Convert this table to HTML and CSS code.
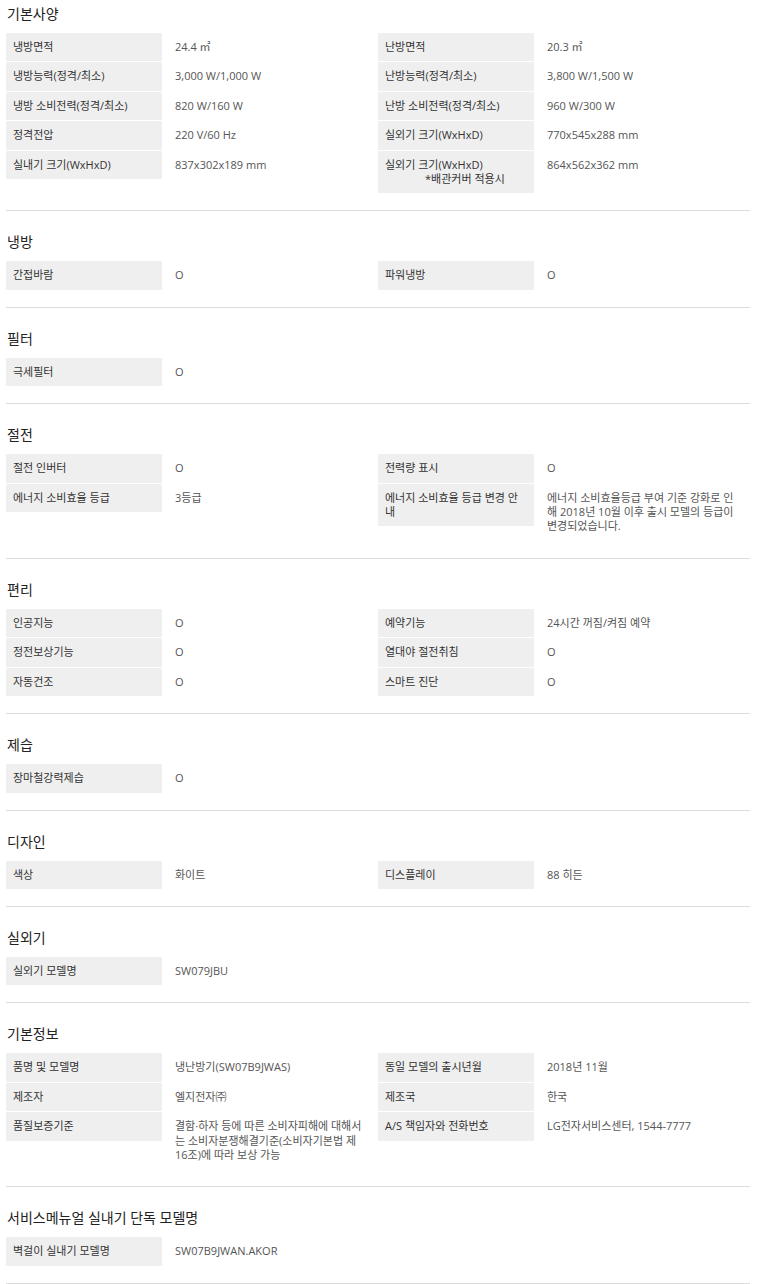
FILE: index.html
```html
<!DOCTYPE html>
<html lang="ko">
<head>
<meta charset="utf-8">
<title>제품 사양</title>
<link rel="stylesheet" href="styles.css">
</head>
<body>
<div class="spec">
  <section class="sec first">
    <h2 class="sec-title">기본사양</h2>
    <div class="grid">
      <div class="item"><div class="lbl">냉방면적</div><div class="val">24.4 ㎡</div></div>
      <div class="item"><div class="lbl">난방면적</div><div class="val">20.3 ㎡</div></div>
      <div class="item"><div class="lbl">냉방능력(정격/최소)</div><div class="val">3,000 W/1,000 W</div></div>
      <div class="item"><div class="lbl">난방능력(정격/최소)</div><div class="val">3,800 W/1,500 W</div></div>
      <div class="item"><div class="lbl">냉방 소비전력(정격/최소)</div><div class="val">820 W/160 W</div></div>
      <div class="item"><div class="lbl">난방 소비전력(정격/최소)</div><div class="val">960 W/300 W</div></div>
      <div class="item"><div class="lbl">정격전압</div><div class="val">220 V/60 Hz</div></div>
      <div class="item"><div class="lbl">실외기 크기(WxHxD)</div><div class="val">770x545x288 mm</div></div>
      <div class="item"><div class="lbl">실내기 크기(WxHxD)</div><div class="val">837x302x189 mm</div></div>
      <div class="item"><div class="lbl">실외기 크기(WxHxD)<br><span class="indent"></span>*배관커버 적용시</div><div class="val">864x562x362 mm</div></div>
    </div>
  </section>

  <section class="sec">
    <h2 class="sec-title">냉방</h2>
    <div class="grid">
      <div class="item"><div class="lbl">간접바람</div><div class="val">O</div></div>
      <div class="item"><div class="lbl">파워냉방</div><div class="val">O</div></div>
    </div>
  </section>

  <section class="sec">
    <h2 class="sec-title">필터</h2>
    <div class="grid">
      <div class="item"><div class="lbl">극세필터</div><div class="val">O</div></div>
    </div>
  </section>

  <section class="sec">
    <h2 class="sec-title">절전</h2>
    <div class="grid">
      <div class="item"><div class="lbl">절전 인버터</div><div class="val">O</div></div>
      <div class="item"><div class="lbl">전력량 표시</div><div class="val">O</div></div>
      <div class="item"><div class="lbl">에너지 소비효율 등급</div><div class="val">3등급</div></div>
      <div class="item"><div class="lbl">에너지 소비효율 등급 변경 안내</div><div class="val">에너지 소비효율등급 부여 기준 강화로 인해 2018년 10월 이후 출시 모델의 등급이 변경되었습니다.</div></div>
    </div>
  </section>

  <section class="sec">
    <h2 class="sec-title">편리</h2>
    <div class="grid">
      <div class="item"><div class="lbl">인공지능</div><div class="val">O</div></div>
      <div class="item"><div class="lbl">예약기능</div><div class="val">24시간 꺼짐/켜짐 예약</div></div>
      <div class="item"><div class="lbl">정전보상기능</div><div class="val">O</div></div>
      <div class="item"><div class="lbl">열대야 절전취침</div><div class="val">O</div></div>
      <div class="item"><div class="lbl">자동건조</div><div class="val">O</div></div>
      <div class="item"><div class="lbl">스마트 진단</div><div class="val">O</div></div>
    </div>
  </section>

  <section class="sec">
    <h2 class="sec-title">제습</h2>
    <div class="grid">
      <div class="item"><div class="lbl">장마철강력제습</div><div class="val">O</div></div>
    </div>
  </section>

  <section class="sec">
    <h2 class="sec-title">디자인</h2>
    <div class="grid">
      <div class="item"><div class="lbl">색상</div><div class="val">화이트</div></div>
      <div class="item"><div class="lbl">디스플레이</div><div class="val">88 히든</div></div>
    </div>
  </section>

  <section class="sec">
    <h2 class="sec-title">실외기</h2>
    <div class="grid">
      <div class="item"><div class="lbl">실외기 모델명</div><div class="val">SW079JBU</div></div>
    </div>
  </section>

  <section class="sec">
    <h2 class="sec-title">기본정보</h2>
    <div class="grid">
      <div class="item"><div class="lbl">품명 및 모델명</div><div class="val">냉난방기(SW07B9JWAS)</div></div>
      <div class="item"><div class="lbl">동일 모델의 출시년월</div><div class="val">2018년 11월</div></div>
      <div class="item"><div class="lbl">제조자</div><div class="val">엘지전자㈜</div></div>
      <div class="item"><div class="lbl">제조국</div><div class="val">한국</div></div>
      <div class="item"><div class="lbl">품질보증기준</div><div class="val">결함·하자 등에 따른 소비자피해에 대해서는 소비자분쟁해결기준(소비자기본법 제16조)에 따라 보상 가능</div></div>
      <div class="item"><div class="lbl">A/S 책임자와 전화번호</div><div class="val">LG전자서비스센터, 1544-7777</div></div>
    </div>
  </section>

  <section class="sec">
    <h2 class="sec-title">서비스메뉴얼 실내기 단독 모델명</h2>
    <div class="grid">
      <div class="item"><div class="lbl">벽걸이 실내기 모델명</div><div class="val">SW07B9JWAN.AKOR</div></div>
    </div>
  </section>
</div>
</body>
</html>
```

FILE: styles.css
```css
html, body {
  margin: 0;
  padding: 0;
  background: #fff;
}

body {
  font-family: "Open Sans", "Noto Sans CJK KR", sans-serif;
  color: #333;
}

.spec {
  width: 744px;
  margin-left: 6px;
}

.sec {
  padding: 21px 0 17px;
  border-bottom: 1px solid #dcdcdc;
}

.sec.first {
  padding-top: 4px;
}

.sec-title {
  margin: 0 0 9px 1px;
  font-size: 14px;
  line-height: 20px;
  font-weight: 400;
  color: #222;
}

.grid {
  display: grid;
  grid-template-columns: 372px 372px;
  row-gap: 1px;
}

.item {
  display: flex;
  align-items: flex-start;
}

.lbl {
  flex: 0 0 156px;
  box-sizing: border-box;
  padding: 7px 7px;
  background: #efefef;
  font-size: 11px;
  line-height: 14.4px;
  color: #333;
}

.indent {
  display: inline-block;
  width: 40px;
}

.val {
  flex: 1 1 auto;
  box-sizing: border-box;
  padding: 7px 10px 7px 13px;
  font-size: 11px;
  line-height: 14.4px;
  color: #555;
}
```
